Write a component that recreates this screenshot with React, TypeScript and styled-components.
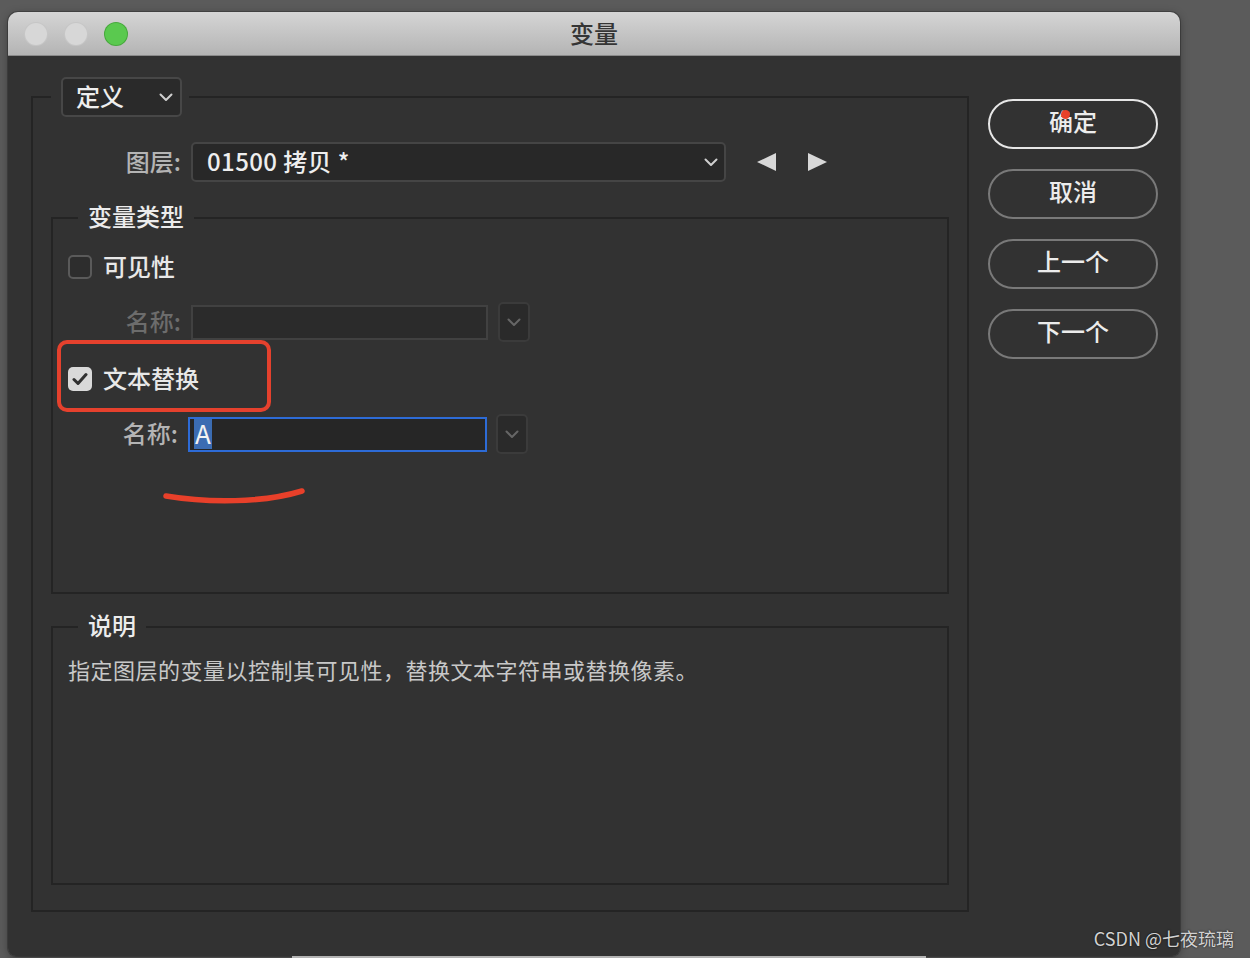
import React from 'react';
import styled, { createGlobalStyle } from 'styled-components';

const GlobalStyle = createGlobalStyle`
  html, body { margin: 0; padding: 0; background: #5b5b5b; }
  body { font-family: "Noto Sans CJK SC", "Noto Sans", sans-serif; }
  * { box-sizing: border-box; }
`;

const FONT = `"Noto Sans CJK SC", "Noto Sans", sans-serif`;

const Page = styled.div`
  position: relative;
  width: 1250px;
  height: 958px;
  overflow: hidden;
  padding-top: 12px;
  background: #5b5b5b;
`;

const Window = styled.div`
  margin-left: 8px;
  width: 1172px;
  height: 944px;
  border-radius: 10px 10px 8px 8px;
  overflow: hidden;
  box-shadow: 0 0 0 1px rgba(0, 0, 0, 0.22), 0 2px 8px rgba(0, 0, 0, 0.35);
  display: flex;
  flex-direction: column;
`;

const BottomStrip = styled.div`
  margin-left: 292px;
  width: 634px;
  height: 2px;
  background: #b4b4b4;
`;

const TitleBar = styled.div`
  height: 44px;
  flex: none;
  background: linear-gradient(#d5d5d5, #b4b4b4);
  border-bottom: 1px solid #8a8a8a;
  display: grid;
  grid-template-columns: 1fr auto 1fr;
  align-items: center;
  padding: 0 17px;
`;

const Lights = styled.div`
  display: flex;
  gap: 18px;
  align-items: center;
`;

const Light = styled.span<{ $color: string; $edge: string }>`
  width: 22px;
  height: 22px;
  border-radius: 50%;
  background: ${(p) => p.$color};
  box-shadow: 0 0 0 1px ${(p) => p.$edge};
`;

const Title = styled.div`
  font-family: ${FONT};
  font-size: 24px;
  font-weight: 500;
  color: #353535;
  line-height: 30px;
  padding-bottom: 2px;
`;

const Body = styled.div`
  position: relative;
  flex: 1;
  background: #323232;
  display: flex;
  align-items: flex-start;
  padding: 21px 0 0 23px;
  gap: 19px;
`;

const Group = styled.fieldset`
  margin: 0;
  padding: 0;
  min-width: 0;
  border: 2px solid #242424;
`;

const Legend = styled.legend<{ $offset: number; $pad: string }>`
  margin-left: ${(p) => p.$offset}px;
  padding: ${(p) => p.$pad};
  font-family: ${FONT};
  font-size: 24px;
  font-weight: 500;
  line-height: 28px;
  color: #ececec;
`;

const OuterGroup = styled(Group)`
  width: 938px;
`;

const InnerGroup = styled(Group)<{ $top: number }>`
  width: 898px;
  margin-top: ${(p) => p.$top}px;
`;

const GroupContent = styled.div<{ $pad: string }>`
  padding: ${(p) => p.$pad};
`;

const ModeSelect = styled.span`
  display: inline-flex;
  align-items: center;
  justify-content: space-between;
  width: 121px;
  height: 40px;
  padding: 0 7px 0 13px;
  background: #2a2a2a;
  border: 2px solid #474747;
  border-radius: 5px;
  font-family: ${FONT};
  font-size: 24px;
  font-weight: 500;
  line-height: 28px;
  color: #eeeeee;
  vertical-align: top;
`;

const Raised = styled.span`
  padding-bottom: 3px;
`;

const Row = styled.div<{ $top?: number; $height: number }>`
  display: flex;
  align-items: center;
  height: ${(p) => p.$height}px;
  margin-top: ${(p) => p.$top ?? 0}px;
`;

const FieldLabel = styled.span<{ $width: number; $tone: 'normal' | 'dim' }>`
  width: ${(p) => p.$width}px;
  margin-right: 10px;
  flex: none;
  text-align: right;
  padding-bottom: 4px;
  font-family: ${FONT};
  font-size: 24px;
  font-weight: 500;
  color: ${(p) => (p.$tone === 'dim' ? '#6c6c6c' : '#b4b4b4')};
  white-space: nowrap;
`;

const LayerSelect = styled.div`
  width: 535px;
  height: 40px;
  flex: none;
  display: flex;
  align-items: center;
  justify-content: space-between;
  padding: 0 6px 0 14px;
  background: #282828;
  border: 2px solid #454545;
  border-radius: 5px;
  font-family: ${FONT};
  font-size: 24px;
  font-weight: 500;
  color: #eeeeee;
`;

const LayerName = styled.span`
  letter-spacing: 0.4px;
  padding-bottom: 4px;
`;

const Arrows = styled.div`
  display: flex;
  align-items: center;
  gap: 32px;
  margin-left: 31px;
`;

const CheckRow = styled.label<{ $top?: number }>`
  display: flex;
  align-items: center;
  gap: 11px;
  height: 34px;
  margin-top: ${(p) => p.$top ?? 0}px;
  font-family: ${FONT};
  font-size: 24px;
  font-weight: 500;
  color: #e8e8e8;
`;

const CheckText = styled.span`
  padding-bottom: 4px;
`;

const Box = styled.span<{ $checked: boolean }>`
  width: 24px;
  height: 24px;
  flex: none;
  border-radius: 5px;
  display: flex;
  align-items: center;
  justify-content: center;
  background: ${(p) => (p.$checked ? '#d9d9d9' : '#2d2d2d')};
  border: ${(p) => (p.$checked ? 'none' : '2px solid #5a5a5a')};
`;

const TextInput = styled.div<{ $width: number; $focused: boolean }>`
  width: ${(p) => p.$width}px;
  height: 35px;
  flex: none;
  display: flex;
  align-items: center;
  padding-left: 4px;
  background: ${(p) => (p.$focused ? '#262626' : '#2b2b2b')};
  border: 2px solid ${(p) => (p.$focused ? '#2d6bd6' : '#414141')};
`;

const Selected = styled.span`
  background: #3b6cb2;
  color: #f2f2f2;
  font-family: ${FONT};
  font-size: 26px;
  line-height: 30px;
  height: 30px;
  padding: 0 1px;
  display: flex;
  align-items: center;
`;

const SelectedGlyph = styled.span`
  padding-bottom: 3px;
`;

const DropButton = styled.div<{ $gap: number }>`
  width: 32px;
  height: 40px;
  flex: none;
  margin-left: ${(p) => p.$gap}px;
  display: flex;
  align-items: center;
  justify-content: center;
  background: #2a2a2a;
  border: 2px solid #3b3b3b;
  border-radius: 5px;
`;

const Description = styled.div`
  font-family: ${FONT};
  font-size: 22px;
  line-height: 32px;
  letter-spacing: 0.5px;
  color: #c8c8c8;
  white-space: nowrap;
`;

const ButtonColumn = styled.div`
  display: flex;
  flex-direction: column;
  gap: 20px;
  margin-top: 22px;
`;

const PillButton = styled.button<{ $primary?: boolean }>`
  position: relative;
  width: 170px;
  height: 50px;
  border-radius: 25px;
  border: 2px solid ${(p) => (p.$primary ? '#e6e6e6' : '#797979')};
  background: transparent;
  color: #ececec;
  font-family: ${FONT};
  font-size: 24px;
  font-weight: 500;
  padding: 0 0 7px 0;
  cursor: default;
`;

const RedDot = styled.span`
  position: absolute;
  left: 71px;
  top: 9px;
  width: 9px;
  height: 9px;
  border-radius: 50%;
  background: #e8402a;
`;

const AnnotationBox = styled.div`
  position: absolute;
  left: 49px;
  top: 284px;
  width: 214px;
  height: 72px;
  border: 4px solid #e5412d;
  border-radius: 10px;
  pointer-events: none;
`;

const AnnotationStroke = styled.svg`
  position: absolute;
  left: 155px;
  top: 431px;
  overflow: visible;
  pointer-events: none;
`;

const Watermark = styled.div`
  position: absolute;
  right: 16px;
  bottom: 9px;
  font-family: ${FONT};
  font-size: 18px;
  line-height: 22px;
  color: #d2d2d2;
  text-shadow: 0 0 2px rgba(0, 0, 0, 0.8);
`;

const Chevron: React.FC<{ color: string }> = ({ color }) => (
  <svg width="14" height="9" viewBox="0 0 14 9">
    <polyline points="1.5,1.5 7,7 12.5,1.5" fill="none" stroke={color} strokeWidth="2" strokeLinecap="round" strokeLinejoin="round" />
  </svg>
);

const Tick: React.FC = () => (
  <svg width="16" height="14" viewBox="0 0 16 14">
    <polyline points="2,7.5 6,11.5 14,2.5" fill="none" stroke="#303030" strokeWidth="3" strokeLinecap="round" strokeLinejoin="round" />
  </svg>
);

const Triangle: React.FC<{ dir: 'left' | 'right' }> = ({ dir }) => (
  <svg width="19" height="18" viewBox="0 0 19 18">
    <polygon points={dir === 'left' ? '19,0 19,18 0,9' : '0,0 0,18 19,9'} fill="#d8d8d8" />
  </svg>
);

export default function App() {
  return (
    <Page>
      <GlobalStyle />
      <Window>
        <TitleBar>
          <Lights>
            <Light $color="#d7d7d7" $edge="#c6c6c6" />
            <Light $color="#d7d7d7" $edge="#c6c6c6" />
            <Light $color="#5ac94f" $edge="#46a83c" />
          </Lights>
          <Title>变量</Title>
          <span />
        </TitleBar>
        <Body>
          <OuterGroup>
            <Legend $offset={18} $pad="0 7px 0 10px">
              <ModeSelect>
                <Raised>定义</Raised>
                <Chevron color="#cfcfcf" />
              </ModeSelect>
            </Legend>
            <GroupContent $pad="25px 18px 25px 18px">
              <Row $height={40}>
                <FieldLabel $width={130} $tone="normal">图层:</FieldLabel>
                <LayerSelect>
                  <LayerName>01500 拷贝 *</LayerName>
                  <Chevron color="#cfcfcf" />
                </LayerSelect>
                <Arrows>
                  <Triangle dir="left" />
                  <Triangle dir="right" />
                </Arrows>
              </Row>

              <InnerGroup $top={20}>
                <Legend $offset={25} $pad="0 10px 4px 10px">变量类型</Legend>
                <GroupContent $pad="16px 15px 138px 15px">
                  <CheckRow>
                    <Box $checked={false} />
                    <CheckText>可见性</CheckText>
                  </CheckRow>
                  <Row $top={18} $height={40}>
                    <FieldLabel $width={113} $tone="dim">名称:</FieldLabel>
                    <TextInput $width={297} $focused={false} />
                    <DropButton $gap={10}>
                      <Chevron color="#666666" />
                    </DropButton>
                  </Row>
                  <CheckRow $top={20}>
                    <Box $checked={true}>
                      <Tick />
                    </Box>
                    <CheckText>文本替换</CheckText>
                  </CheckRow>
                  <Row $top={18} $height={40}>
                    <FieldLabel $width={110} $tone="normal">名称:</FieldLabel>
                    <TextInput $width={299} $focused={true}>
                      <Selected>
                        <SelectedGlyph>A</SelectedGlyph>
                      </Selected>
                    </TextInput>
                    <DropButton $gap={9}>
                      <Chevron color="#666666" />
                    </DropButton>
                  </Row>
                </GroupContent>
              </InnerGroup>

              <InnerGroup $top={17}>
                <Legend $offset={25} $pad="0 10px 4px 10px">说明</Legend>
                <GroupContent $pad="10px 15px 198px 15px">
                  <Description>指定图层的变量以控制其可见性，替换文本字符串或替换像素。</Description>
                </GroupContent>
              </InnerGroup>
            </GroupContent>
          </OuterGroup>

          <ButtonColumn>
            <PillButton $primary>
              确定
              <RedDot />
            </PillButton>
            <PillButton>取消</PillButton>
            <PillButton>上一个</PillButton>
            <PillButton>下一个</PillButton>
          </ButtonColumn>

          <AnnotationBox />
          <AnnotationStroke width="150" height="20" viewBox="0 0 150 20">
            <path d="M3 9 C 45 16, 100 16, 139 4" fill="none" stroke="#e8402a" strokeWidth="5.5" strokeLinecap="round" />
          </AnnotationStroke>
        </Body>
      </Window>
      <BottomStrip />
      <Watermark>CSDN @七夜琉璃</Watermark>
    </Page>
  );
}
